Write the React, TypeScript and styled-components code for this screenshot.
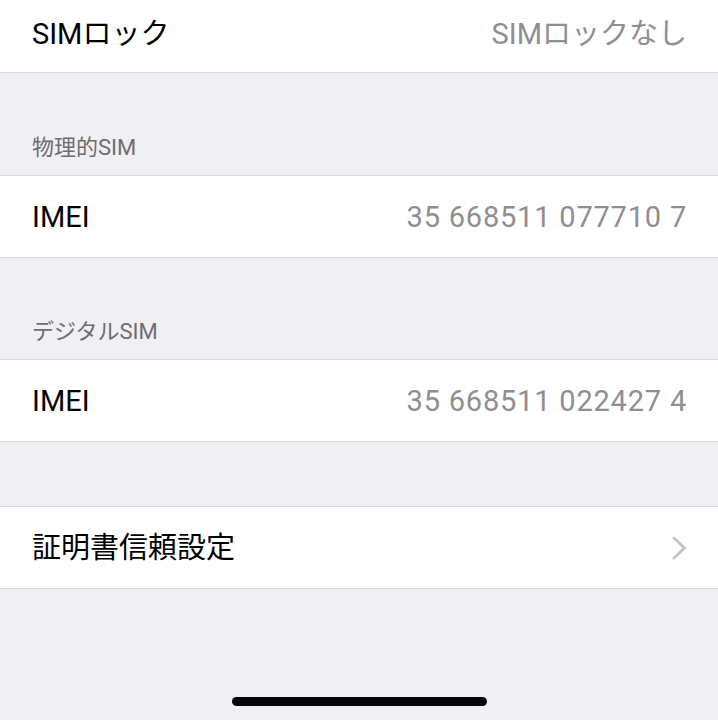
import React from 'react';
import styled, { createGlobalStyle } from 'styled-components';

const GlobalStyle = createGlobalStyle`
  html, body {
    margin: 0;
    padding: 0;
    background: #efeff4;
  }
  body {
    font-family: Roboto, "Noto Sans CJK JP", sans-serif;
    -webkit-font-smoothing: antialiased;
  }
`;

const Screen = styled.div`
  position: relative;
  width: 718px;
  height: 720px;
  overflow: hidden;
  background: #efeff4;
  display: flex;
  flex-direction: column;
`;

const Group = styled.div<{ $top?: boolean }>`
  background: #ffffff;
  border-top: ${(p) => (p.$top ? 'none' : '1px solid #d9d9dd')};
  border-bottom: 1px solid #d9d9dd;
`;

const Row = styled.div<{ $height?: number }>`
  height: ${(p) => p.$height ?? 81}px;
  box-sizing: border-box;
  padding: 1px 31px 0 32px;
  display: flex;
  align-items: center;
  justify-content: space-between;
  font-size: 29px;
  line-height: 1;
`;

const Label = styled.span`
  color: #000000;
`;

const Value = styled.span<{ $digits?: boolean }>`
  color: #8e8e93;
  letter-spacing: ${(p) => (p.$digits ? '0.8px' : '0')};
`;

const Gap = styled.div<{ $height: number }>`
  height: ${(p) => p.$height}px;
  box-sizing: border-box;
  padding: 0 32px 16px;
  display: flex;
  align-items: flex-end;
`;

const Header = styled.span`
  font-size: 22px;
  line-height: 1;
  color: #6d6d72;
`;

const HomeIndicator = styled.div`
  position: absolute;
  left: 232px;
  bottom: 14px;
  width: 255px;
  height: 9px;
  border-radius: 5px;
  background: #050505;
`;

const Chevron = () => (
  <svg width="15" height="24" viewBox="0 0 15 24">
    <polyline
      points="2,2 12.5,12 2,22"
      fill="none"
      stroke="#c4c4c8"
      strokeWidth="3"
      strokeLinecap="round"
      strokeLinejoin="round"
    />
  </svg>
);

const App: React.FC = () => {
  return (
    <>
      <GlobalStyle />
      <Screen>
        <Group $top>
          <Row $height={72} style={{ paddingBottom: 4 }}>
            <Label>SIMロック</Label>
            <Value>SIMロックなし</Value>
          </Row>
        </Group>

        <Gap $height={102}>
          <Header>物理的SIM</Header>
        </Gap>
        <Group>
          <Row>
            <Label>IMEI</Label>
            <Value $digits>35 668511 077710 7</Value>
          </Row>
        </Group>

        <Gap $height={101}>
          <Header>デジタルSIM</Header>
        </Gap>
        <Group>
          <Row>
            <Label>IMEI</Label>
            <Value $digits>35 668511 022427 4</Value>
          </Row>
        </Group>

        <Gap $height={64} />
        <Group>
          <Row>
            <Label>証明書信頼設定</Label>
            <Chevron />
          </Row>
        </Group>

        <HomeIndicator />
      </Screen>
    </>
  );
};

export default App;
